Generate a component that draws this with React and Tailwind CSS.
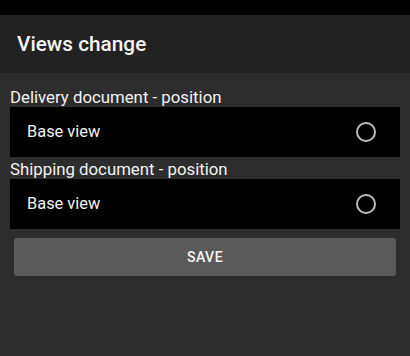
export default function App() {
  const Radio = () => (
    <svg width="22" height="22" viewBox="0 0 22 22" className="shrink-0">
      <circle cx="11" cy="11" r="9" fill="none" stroke="#bdbdbd" strokeWidth="2" />
    </svg>
  );
  const Row = ({ label }) => (
    <div className="h-[50px] bg-black flex items-center justify-between pl-[17px] pr-[23px]">
      <span className="text-[16.4px] leading-[20px] text-[#f2f2f2]">{label}</span>
      <Radio />
    </div>
  );
  return (
    <div
      className="w-[410px] h-[356px] bg-[#2d2d2d] flex flex-col"
      style={{ fontFamily: 'Roboto, "Noto Sans", sans-serif' }}
    >
      <div className="h-[15px] bg-black" />
      <div className="h-[58px] bg-[#222222] flex items-center pl-[17px]">
        <span className="text-[20.8px] font-medium text-[#f5f5f5] leading-[24px]">Views change</span>
      </div>
      <div className="flex flex-col px-[10px] pt-[14px]">
        <div className="text-[16.8px] leading-[20px] text-[#f2f2f2]">Delivery document - position</div>
        <Row label="Base view" />
        <div className="mt-[2px] text-[16.8px] leading-[20px] text-[#f2f2f2]">Shipping document - position</div>
        <Row label="Base view" />
        <button className="mt-[9px] mx-[4px] h-[38px] rounded-[3px] bg-[#5a5a5a] text-[14px] font-medium tracking-[0.5px] text-[#f5f5f5]">
          SAVE
        </button>
      </div>
    </div>
  );
}
